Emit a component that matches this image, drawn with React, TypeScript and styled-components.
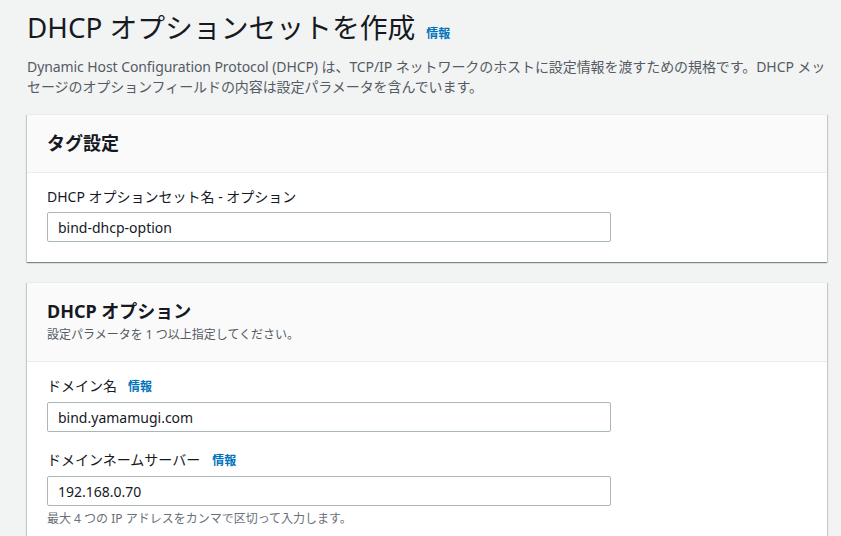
import styled, { createGlobalStyle } from 'styled-components';

const GlobalStyle = createGlobalStyle`
  html, body {
    margin: 0;
    padding: 0;
    background: #f2f3f3;
  }
  body {
    font-family: 'Noto Sans', 'Noto Sans CJK JP', sans-serif;
    color: #16191f;
    -webkit-font-smoothing: antialiased;
  }
`;

const Page = styled.div`
  padding: 7px 14px 0 27px;
  display: flex;
  flex-direction: column;
  width: 841px;
  height: 536px;
  box-sizing: border-box;
  overflow: hidden;
`;

const TitleRow = styled.div`
  display: flex;
  align-items: baseline;
  gap: 11px;
`;

const Title = styled.h1`
  margin: 0;
  font-size: 27.8px;
  font-weight: 400;
  line-height: 40px;
  color: #16191f;
`;

const InfoLink = styled.a<{ $gap?: number }>`
  font-size: 12px;
  font-weight: 700;
  color: #0073bb;
  text-decoration: none;
  margin-left: ${(p) => p.$gap ?? 0}px;
`;

const Intro = styled.p`
  margin: 10px 0 0;
  font-size: 14px;
  letter-spacing: -0.08px;
  line-height: 20px;
  color: #545b64;
`;

const Card = styled.section<{ $top: number }>`
  margin-top: ${(p) => p.$top}px;
  background: #fff;
  box-shadow: 0 1px 1px 0 rgba(0, 28, 36, 0.3), 1px 1px 1px 0 rgba(0, 28, 36, 0.15),
    -1px 1px 1px 0 rgba(0, 28, 36, 0.15);
  border-top: 1px solid #eaeded;
`;

const CardHeader = styled.header<{ $sub?: boolean }>`
  background: #fafafa;
  border-bottom: 1px solid #eaeded;
  padding: ${(p) => (p.$sub ? '16px 20px 18px' : '16px 20px 16px')};
`;

const CardTitle = styled.h2`
  margin: 0;
  font-size: 18px;
  font-weight: 700;
  line-height: 25px;
  color: #16191f;
`;

const CardSub = styled.div`
  margin-top: 3px;
  font-size: 12px;
  line-height: 16px;
  color: #545b64;
`;

const CardBody = styled.div`
  padding: 13px 20px 20px;
  display: flex;
  flex-direction: column;
  gap: 17px;
`;

const Field = styled.div`
  display: flex;
  flex-direction: column;
`;

const Label = styled.label`
  font-size: 14px;
  line-height: 22px;
  color: #16191f;
  margin-bottom: 4px;
  display: flex;
  align-items: baseline;
`;

const Input = styled.input`
  width: 564px;
  height: 30px;
  box-sizing: border-box;
  border: 1px solid #aab7b8;
  border-radius: 2px;
  padding: 0 10px;
  font-family: 'Noto Sans', 'Noto Sans CJK JP', sans-serif;
  font-size: 14px;
  color: #16191f;
  background: #fff;
  outline: none;
`;

const Hint = styled.div`
  font-size: 12px;
  line-height: 16px;
  color: #687078;
  margin-top: 5px;
`;

const App = () => {
  return (
    <>
      <GlobalStyle />
      <Page>
        <TitleRow>
          <Title>DHCP オプションセットを作成</Title>
          <InfoLink href="#">情報</InfoLink>
        </TitleRow>
        <Intro>
          Dynamic Host Configuration Protocol (DHCP) は、TCP/IP ネットワークのホストに設定情報を渡すための規格です。DHCP メッセージのオプションフィールドの内容は設定パラメータを含んでいます。
        </Intro>

        <Card $top={17}>
          <CardHeader>
            <CardTitle>タグ設定</CardTitle>
          </CardHeader>
          <CardBody>
            <Field>
              <Label>DHCP オプションセット名 - オプション</Label>
              <Input defaultValue="bind-dhcp-option" />
            </Field>
          </CardBody>
        </Card>

        <Card $top={20}>
          <CardHeader $sub>
            <CardTitle>DHCP オプション</CardTitle>
            <CardSub>設定パラメータを 1 つ以上指定してください。</CardSub>
          </CardHeader>
          <CardBody>
            <Field>
              <Label>
                ドメイン名<InfoLink href="#" $gap={11}>情報</InfoLink>
              </Label>
              <Input defaultValue="bind.yamamugi.com" />
            </Field>
            <Field>
              <Label>
                ドメインネームサーバー<InfoLink href="#" $gap={12}>情報</InfoLink>
              </Label>
              <Input defaultValue="192.168.0.70" />
              <Hint>最大 4 つの IP アドレスをカンマで区切って入力します。</Hint>
            </Field>
          </CardBody>
        </Card>
      </Page>
    </>
  );
};

export default App;
